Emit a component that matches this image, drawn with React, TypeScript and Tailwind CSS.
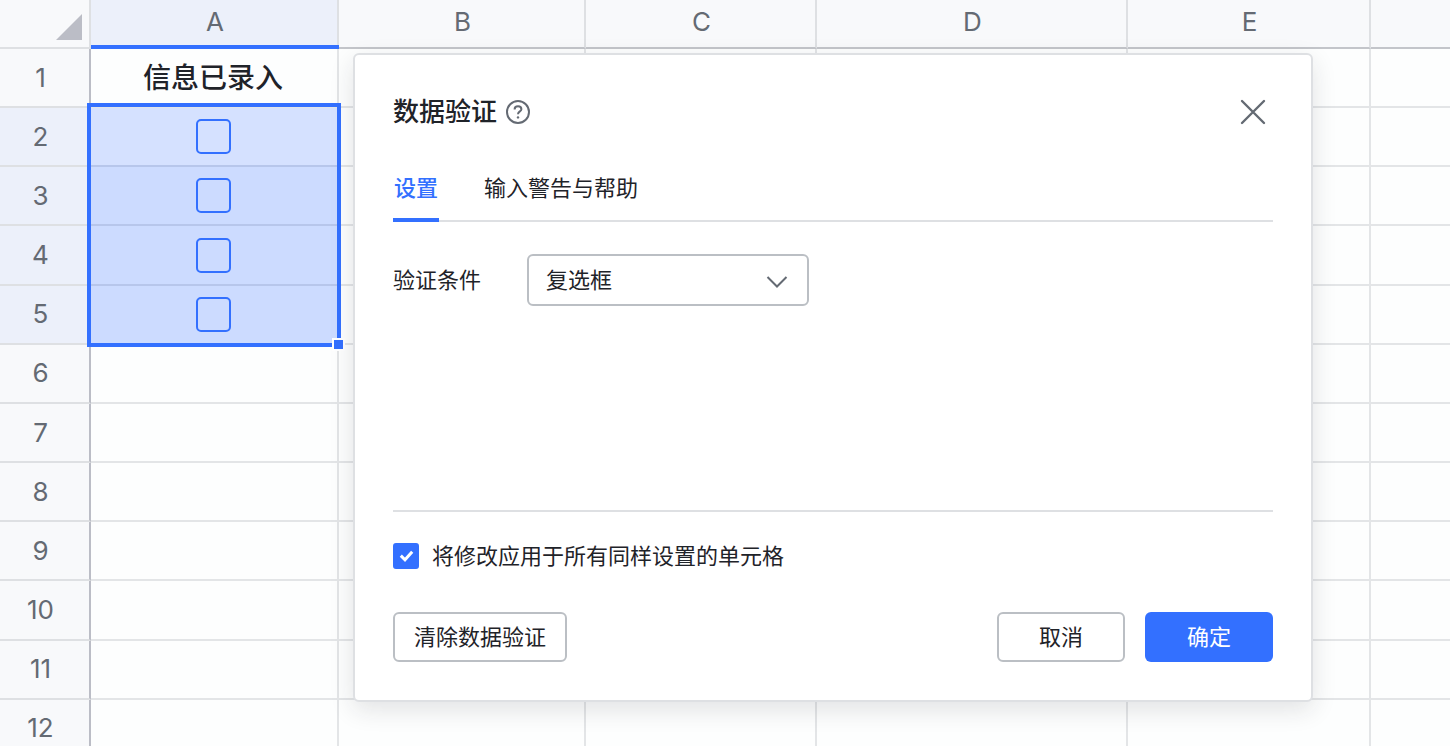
import { useState } from 'react'
import clsx from 'clsx'

const columns = [
    { name: 'A', width: 'w-[248px]' },
    { name: 'B', width: 'w-[247px]' },
    { name: 'C', width: 'w-[231px]' },
    { name: 'D', width: 'w-[311px]' },
    { name: 'E', width: 'w-[243px]' },
    { name: '', width: '' },
]

const rows = [1, 2, 3, 4, 5, 6, 7, 8, 9, 10, 11, 12]

const isSelectedRow = (row: number) => row >= 2 && row <= 5

function CellCheckbox({ label }: { label: string }) {
    return (
        <input
            type="checkbox"
            aria-label={label}
            className="block mx-auto size-[35px] appearance-none rounded-[5px] border-2 border-[#3370ff] checked:bg-[#3370ff]"
        />
    )
}

function Sheet() {
    return (
        <div className="relative">
            <table className="w-full h-[759px] table-fixed border-separate border-spacing-0 text-[26px] leading-8 text-[#646a73]">
                <colgroup>
                    <col className="w-[91px]" />
                    {columns.map((col, i) => (
                        <col key={i} className={col.width} />
                    ))}
                </colgroup>
                <thead>
                    <tr className="h-[49px]">
                        <th className="p-0 bg-[#f8f9fb] border-r-2 border-b-2 border-[#dee0e3] align-bottom">
                            <button type="button" aria-label="全选" className="block ml-auto mr-[7px] mb-[7px]">
                                <svg width="26" height="26" viewBox="0 0 26 26" fill="#bbbdc6">
                                    <path d="M26 0V26H0Z" />
                                </svg>
                            </button>
                        </th>
                        {columns.map((col, i) => (
                            <th
                                key={i}
                                scope="col"
                                className={clsx(
                                    'relative p-0 pb-1 pl-0.5 font-normal border-b-2 border-r-2 last:border-r-0 border-r-[#dee0e3] border-b-[#c3c5ca]',
                                    col.name === 'A' ? 'bg-[#ecf0fa]' : 'bg-[#f8f9fb]',
                                )}
                            >
                                {col.name}
                                {col.name === 'A' && (
                                    <span className="absolute left-0 -right-0.5 -bottom-0.5 h-1 bg-[#3370ff]" />
                                )}
                            </th>
                        ))}
                    </tr>
                </thead>
                <tbody>
                    {rows.map((row) => (
                        <tr key={row} className="h-[59px]">
                            <th
                                scope="row"
                                className={clsx(
                                    'p-0 pr-2 font-normal border-b-2 border-r-2 border-b-[#dee0e3] border-r-[#bbbdc6]',
                                    isSelectedRow(row) ? 'bg-[#ecf0fa]' : 'bg-[#f8f9fb]',
                                )}
                            >
                                {row}
                            </th>
                            {columns.map((col, i) => {
                                const selected = col.name === 'A' && isSelectedRow(row)
                                return (
                                    <td
                                        key={i}
                                        className={clsx(
                                            'p-0 pr-0.5 border-b-2 border-r-2 last:border-r-0',
                                            selected && row === 2 && 'bg-[#d5e1ff]',
                                            selected && row > 2 && 'bg-[#ccdbff]',
                                            selected ? 'border-[#b7c6eb]' : 'bg-[#fdfefe] border-[#e3e5e7]',
                                        )}
                                    >
                                        {selected && <CellCheckbox label={`A${row}`} />}
                                        {col.name === 'A' && row === 1 && (
                                            <div className="text-center text-[28px] font-medium text-[#1f2329]">信息已录入</div>
                                        )}
                                    </td>
                                )
                            })}
                        </tr>
                    ))}
                </tbody>
            </table>
            <div className="absolute left-[87px] top-[103px] w-[254px] h-[244px] border-4 border-[#3370ff] pointer-events-none">
                <span className="absolute -right-2 -bottom-2 size-[13px] border-2 border-white bg-[#3370ff]" />
            </div>
        </div>
    )
}

function ValidationDialog() {
    const [tab, setTab] = useState(0)
    const [applyAll, setApplyAll] = useState(true)

    return (
        <div
            role="dialog"
            aria-labelledby="dialog-title"
            className="absolute left-[353px] top-[53px] w-[960px] px-[38px] pt-[39px] pb-[38px] bg-white border-2 border-[#dee0e3] rounded-md shadow-[0_8px_24px_rgba(31,35,41,0.12)] text-[22px] leading-9 text-[#1f2329]"
        >
            <div className="flex items-center h-9">
                <h2 id="dialog-title" className="text-[26px] font-medium">数据验证</h2>
                <button type="button" aria-label="帮助" className="ml-[9px]">
                    <svg width="24" height="24" viewBox="0 0 24 24" fill="none" stroke="#646a73" strokeWidth="2">
                        <circle cx="12" cy="12" r="11" />
                        <path d="M8.6 9.4C8.6 7.5 10 6.3 12 6.3S15.4 7.5 15.4 9.2C15.4 11.4 12 11.5 12 14.2" />
                        <circle cx="12" cy="17.4" r="1.2" fill="#646a73" stroke="none" />
                    </svg>
                </button>
                <button type="button" aria-label="关闭" className="flex items-center justify-center size-10 ml-auto">
                    <svg width="26" height="26" viewBox="0 0 26 26" fill="none" stroke="#646a73" strokeWidth="2.4" strokeLinecap="round">
                        <path d="M2 2L24 24M24 2L2 24" />
                    </svg>
                </button>
            </div>

            <div role="tablist" className="flex gap-11 mt-10 shadow-[inset_0_-2px_0_#dee0e3]">
                {['设置', '输入警告与帮助'].map((label, i) => (
                    <button
                        key={label}
                        type="button"
                        role="tab"
                        aria-selected={tab === i}
                        onClick={() => setTab(i)}
                        className={clsx(
                            'px-px pb-3 border-b-4',
                            tab === i ? 'text-[#3370ff] font-medium border-[#3370ff]' : 'border-transparent',
                        )}
                    >
                        {label}
                    </button>
                ))}
            </div>

            <div className="flex items-start h-[290px] pt-8 border-b-2 border-[#dee0e3]">
                <label htmlFor="condition" className="w-[134px] leading-[52px]">验证条件</label>
                <div className="relative">
                    <select
                        id="condition"
                        className="w-[282px] h-[52px] pl-[17px] appearance-none bg-white border-2 border-[#bbbfc4] rounded-md"
                    >
                        <option>复选框</option>
                    </select>
                    <svg
                        className="absolute right-5 top-5 pointer-events-none"
                        width="24"
                        height="16"
                        viewBox="0 0 24 16"
                        fill="none"
                        stroke="#646a73"
                        strokeWidth="2"
                    >
                        <path d="M2.5 3L12 12.5L21.5 3" />
                    </svg>
                </div>
            </div>

            <div className="flex items-center gap-[13px] h-[26px] mt-[31px]">
                <div className="relative size-[26px]">
                    <input
                        id="apply-all"
                        type="checkbox"
                        checked={applyAll}
                        onChange={(e) => setApplyAll(e.target.checked)}
                        className="block size-[26px] appearance-none rounded-[3px] border-2 border-[#bbbfc4] checked:border-[#3370ff] checked:bg-[#3370ff]"
                    />
                    {applyAll && (
                        <svg
                            className="absolute inset-0 pointer-events-none"
                            width="26"
                            height="26"
                            viewBox="0 0 26 26"
                            fill="none"
                            stroke="#fff"
                            strokeWidth="3"
                        >
                            <path d="M7.8 12.6L12 16.8L19.2 8.8" />
                        </svg>
                    )}
                </div>
                <label htmlFor="apply-all">将修改应用于所有同样设置的单元格</label>
            </div>

            <div className="flex gap-5 mt-[43px]">
                <button type="button" className="w-[174px] h-[50px] mr-auto border-2 border-[#bbbfc4] rounded-md">清除数据验证</button>
                <button type="button" className="w-32 h-[50px] border-2 border-[#bbbfc4] rounded-md">取消</button>
                <button type="button" className="w-32 h-[50px] bg-[#3370ff] text-white rounded-md">确定</button>
            </div>
        </div>
    )
}

export default function App() {
    return (
        <div className="relative h-screen overflow-hidden bg-white font-[Inter,'Noto_Sans_CJK_SC',sans-serif]">
            <Sheet />
            <ValidationDialog />
        </div>
    )
}
